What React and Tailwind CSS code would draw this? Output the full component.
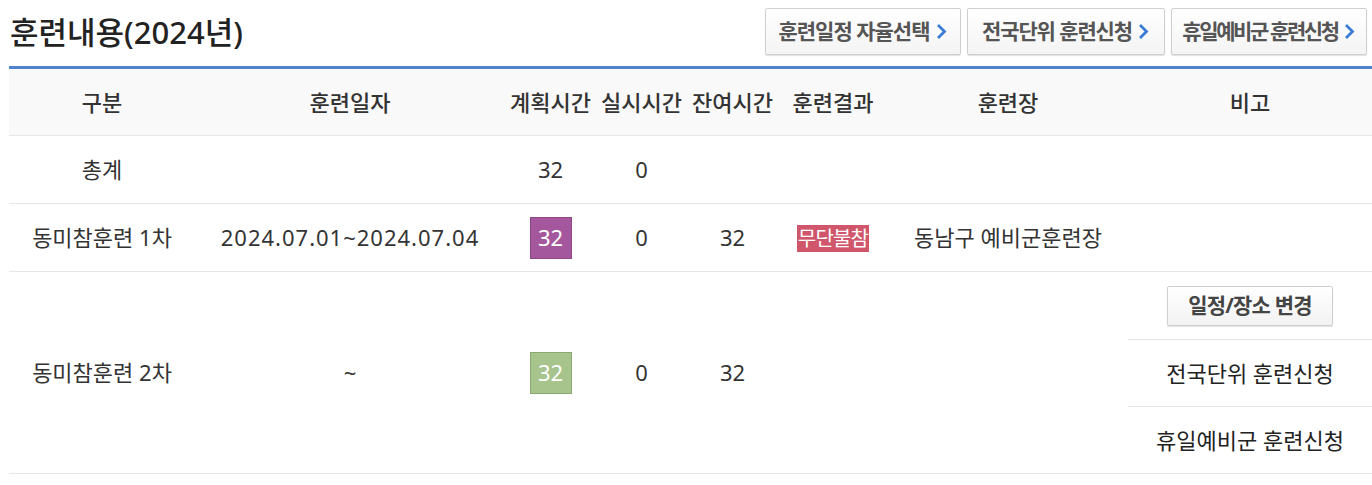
import React from "react";

const font = { fontFamily: '"Noto Sans", "Noto Sans CJK KR", sans-serif' };

function Chevron() {
  return (
    <svg width="12" height="15" viewBox="0 0 12 15" className="ml-[6px]">
      <path d="M3 2 L8.5 7.5 L3 13" fill="none" stroke="#3a7bd5" strokeWidth="2.8" strokeLinecap="square" />
    </svg>
  );
}

function TopButton({ label, w, track }) {
  return (
    <div
      className={`flex h-[47px] items-center justify-center rounded-[2px] border border-[#cfcfcf] bg-gradient-to-b from-white to-[#f4f4f4] shadow-[0_1px_1px_rgba(0,0,0,0.12)] ${w}`}
    >
      <span className={`text-[21px] font-bold text-[#555] whitespace-nowrap ${track}`}>{label}</span>
      <Chevron />
    </div>
  );
}

export default function App() {
  const td = "border-b border-[#e6e6e6] text-center text-[22px] text-[#333] p-0";
  return (
    <div className="w-[1372px] h-[485px] overflow-hidden bg-white" style={font}>
      <div className="pl-[9px]">
        <div className="flex h-[66px] items-start justify-between">
          <h1 className="mt-[12px] pl-[1px] text-[31px] font-medium text-[#222] leading-[40px]">
            훈련내용(2024년)
          </h1>
          <div className="mt-[8px] flex gap-[6px] pr-[5px]">
            <TopButton label="훈련일정 자율선택" w="w-[196px]" track="tracking-[-1px]" />
            <TopButton label="전국단위 훈련신청" w="w-[198px]" track="tracking-[-1.1px]" />
            <TopButton label="휴일예비군 훈련신청" w="w-[196px]" track="tracking-[-2.4px]" />
          </div>
        </div>
        <table className="w-[1363px] table-fixed border-collapse border-t-[3px] border-[#4f82cc]">
          <colgroup>
            <col className="w-[186px]" />
            <col className="w-[310px]" />
            <col className="w-[91px]" />
            <col className="w-[91px]" />
            <col className="w-[91px]" />
            <col className="w-[110px]" />
            <col className="w-[240px]" />
            <col className="w-[244px]" />
          </colgroup>
          <thead>
            <tr className="h-[68px] bg-[#f9f9f9]">
              {["구분", "훈련일자", "계획시간", "실시시간", "잔여시간", "훈련결과", "훈련장", "비고"].map((h) => (
                <th key={h} className={`${td} font-medium text-[#222] whitespace-nowrap`}>
                  {h}
                </th>
              ))}
            </tr>
          </thead>
          <tbody>
            <tr className="h-[68px]">
              <td className={td}>총계</td>
              <td className={td}></td>
              <td className={td}>32</td>
              <td className={td}>0</td>
              <td className={td}></td>
              <td className={td}></td>
              <td className={td}></td>
              <td className={td}></td>
            </tr>
            <tr className="h-[68px]">
              <td className={td}>동미참훈련 1차</td>
              <td className={`${td} tracking-[1px]`}>2024.07.01~2024.07.04</td>
              <td className={td}>
                <span className="inline-flex h-[42px] w-[42px] items-center justify-center border border-[#8e4787] bg-[#a5579d] text-white">
                  32
                </span>
              </td>
              <td className={td}>0</td>
              <td className={td}>32</td>
              <td className={td}>
                <span className="inline-block bg-[#cf566b] px-[1px] text-[20px] leading-[27px] tracking-[-0.8px] text-white">
                  무단불참
                </span>
              </td>
              <td className={td}>동남구 예비군훈련장</td>
              <td className={td}></td>
            </tr>
            <tr className="h-[202px]">
              <td className={td}>동미참훈련 2차</td>
              <td className={td}>~</td>
              <td className={td}>
                <span className="inline-flex h-[42px] w-[42px] items-center justify-center border border-[#8aa975] bg-[#a6c48b] text-white">
                  32
                </span>
              </td>
              <td className={td}>0</td>
              <td className={td}>32</td>
              <td className={td}></td>
              <td className={td}></td>
              <td className={td}>
                <div className="flex flex-col">
                  <div className="flex h-[68px] items-center justify-center border-b border-[#e6e6e6]">
                    <div className="flex h-[40px] w-[166px] items-center justify-center rounded-[2px] border border-[#cfcfcf] bg-gradient-to-b from-white to-[#f2f2f2] shadow-[0_1px_1px_rgba(0,0,0,0.12)] text-[21px] font-bold tracking-[-0.8px] text-[#444] whitespace-nowrap">
                      일정/장소 변경
                    </div>
                  </div>
                  <div className="flex h-[67px] items-center justify-center border-b border-[#e6e6e6] text-[#222]">
                    전국단위 훈련신청
                  </div>
                  <div className="flex h-[66px] items-center justify-center text-[#222]">
                    휴일예비군 훈련신청
                  </div>
                </div>
              </td>
            </tr>
          </tbody>
        </table>
      </div>
    </div>
  );
}
